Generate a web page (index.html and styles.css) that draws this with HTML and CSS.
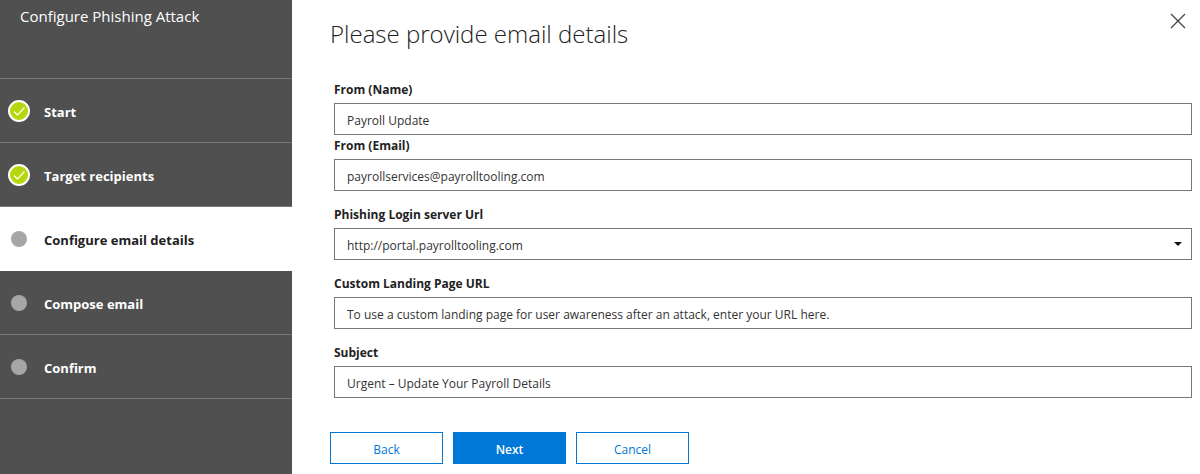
FILE: index.html
```html
<!DOCTYPE html>
<html lang="en">

<head>
    <meta charset="UTF-8">
    <meta name="viewport" content="width=device-width, initial-scale=1.0">
    <title>Configure Phishing Attack</title>
    <link rel="stylesheet" href="styles.css">
</head>

<body>
    <div class="wizard">
        <nav class="sidebar">
            <h2 class="sidebar-title">Configure Phishing Attack</h2>
            <ul class="steps">
                <li class="step">
                    <svg class="step-icon" viewBox="0 0 22 22">
                        <circle cx="11" cy="11" r="10" fill="#b4d80b" stroke="#fff" stroke-width="2" />
                        <path d="M6 11.5l3.5 3.5 7-7.5" fill="none" stroke="#fff" stroke-width="1.2" />
                    </svg>
                    <span>Start</span>
                </li>
                <li class="step">
                    <svg class="step-icon" viewBox="0 0 22 22">
                        <circle cx="11" cy="11" r="10" fill="#b4d80b" stroke="#fff" stroke-width="2" />
                        <path d="M6 11.5l3.5 3.5 7-7.5" fill="none" stroke="#fff" stroke-width="1.2" />
                    </svg>
                    <span>Target recipients</span>
                </li>
                <li class="step active">
                    <svg class="step-icon" viewBox="0 0 22 22">
                        <circle cx="11" cy="11" r="8" fill="#a6a6a6" />
                    </svg>
                    <span>Configure email details</span>
                </li>
                <li class="step">
                    <svg class="step-icon" viewBox="0 0 22 22">
                        <circle cx="11" cy="11" r="8" fill="#a6a6a6" />
                    </svg>
                    <span>Compose email</span>
                </li>
                <li class="step">
                    <svg class="step-icon" viewBox="0 0 22 22">
                        <circle cx="11" cy="11" r="8" fill="#a6a6a6" />
                    </svg>
                    <span>Confirm</span>
                </li>
            </ul>
        </nav>

        <main class="content">
            <header class="content-header">
                <h1>Please provide email details</h1>
                <button type="button" class="close-button" aria-label="Close">
                    <svg width="16" height="16" viewBox="0 0 16 16">
                        <path d="M1 1l14 14M15 1L1 15" fill="none" stroke="#444" stroke-width="1.3" />
                    </svg>
                </button>
            </header>

            <form>
                <div class="fields">
                    <div class="field">
                        <label for="from-name">From (Name)</label>
                        <input type="text" id="from-name" value="Payroll Update">
                    </div>
                    <div class="field">
                        <label for="from-email">From (Email)</label>
                        <input type="text" id="from-email" value="payrollservices@payrolltooling.com">
                    </div>
                    <div class="field spaced">
                        <label for="server-url">Phishing Login server Url</label>
                        <div class="select-wrap">
                            <select id="server-url">
                                <option>http://portal.payrolltooling.com</option>
                            </select>
                            <svg class="arrow" width="8" height="4" viewBox="0 0 8 4">
                                <path d="M0 0h8L4 4z" fill="#111" />
                            </svg>
                        </div>
                    </div>
                    <div class="field spaced">
                        <label for="landing-url">Custom Landing Page URL</label>
                        <input type="text" id="landing-url" placeholder="To use a custom landing page for user awareness after an attack, enter your URL here.">
                    </div>
                    <div class="field spaced">
                        <label for="subject">Subject</label>
                        <input type="text" id="subject" value="Urgent – Update Your Payroll Details">
                    </div>
                </div>

                <div class="buttons">
                    <button type="button">Back</button>
                    <button type="submit" class="primary">Next</button>
                    <button type="button">Cancel</button>
                </div>
            </form>
        </main>
    </div>
</body>

</html>
```

FILE: styles.css
```css
* {
    box-sizing: border-box;
}

body {
    font-family: 'Segoe UI', 'Open Sans', 'Noto Sans', sans-serif;
    font-size: 12px;
    margin: 0;
    color: #222;
    background-color: #fff;
}

.wizard {
    display: flex;
    min-height: 100vh;
}

/* Left side steps */
.sidebar {
    flex: 0 0 292px;
    background-color: #505050;
    color: #fff;
}

.sidebar-title {
    font-size: 15px;
    font-weight: 400;
    line-height: 20px;
    margin: 0;
    padding: 6px 20px 52px;
    border-bottom: 1px solid #777;
}

.steps {
    list-style: none;
    margin: 0;
    padding: 0;
}

.step {
    display: flex;
    align-items: center;
    gap: 14px;
    height: 64px;
    padding: 0 8px;
    border-bottom: 1px solid #777;
    font-size: 13px;
    font-weight: 700;
    line-height: 20px;
}

.step span {
    padding-top: 3px;
}

.step.active {
    background-color: #fff;
    border-bottom-color: #fff;
    color: #222;
}

.step-icon {
    width: 22px;
    height: 22px;
}

/* Main area */
.content {
    flex: 1;
    min-width: 0;
    padding: 12px 8px 8px 38px;
}

.content-header {
    display: flex;
    justify-content: space-between;
    align-items: flex-start;
    margin-bottom: 23px;
}

h1 {
    font-size: 24px;
    font-weight: 300;
    line-height: 44px;
    margin: 0;
}

.close-button {
    display: flex;
    padding: 1px 6px;
    background: none;
    border: none;
    cursor: pointer;
}

.fields {
    padding-left: 4px;
}

.field label {
    display: block;
    font-size: 12px;
    font-weight: 700;
    line-height: 18px;
    padding: 2px 0 4px;
}

.field.spaced {
    margin-top: 13px;
}

input,
select {
    display: block;
    width: 100%;
    height: 32px;
    padding: 2px 12px 0;
    border: 1px solid #777;
    border-radius: 0;
    background-color: #fff;
    color: #333;
    font-family: inherit;
    font-size: 12px;
}

input::placeholder {
    color: #333;
    opacity: 1;
}

.select-wrap {
    position: relative;
}

select {
    appearance: none;
}

.arrow {
    position: absolute;
    top: 14px;
    right: 10px;
    pointer-events: none;
}

.buttons {
    display: flex;
    gap: 10px;
    margin-top: 34px;
}

.buttons button {
    width: 113px;
    height: 32px;
    padding: 2px 0 0;
    border: 1px solid #0078d7;
    background-color: #fff;
    color: #0078d7;
    font-family: inherit;
    font-size: 12px;
    cursor: pointer;
}

.buttons .primary {
    background-color: #0078d7;
    color: #fff;
    font-weight: 600;
}
```
